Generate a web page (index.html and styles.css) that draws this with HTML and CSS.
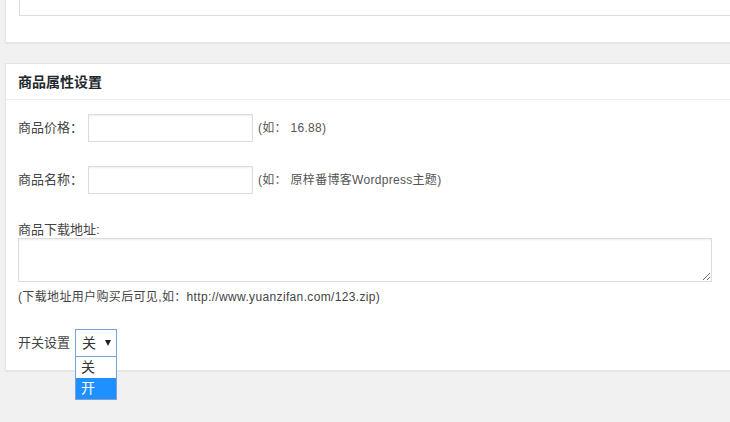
FILE: index.html
```html
<!DOCTYPE html>
<html lang="zh-CN">
<head>
<meta charset="utf-8">
<title>商品属性设置</title>
<link rel="stylesheet" href="styles.css">
</head>
<body>
<div class="wrap">
  <div class="postbox top-box">
    <div class="top-inner"></div>
  </div>
  <div class="postbox">
    <h2 class="box-title">商品属性设置</h2>
    <div class="inside">
      <div class="row row-price">
        <label class="lbl">商品价格：</label>
        <input class="field" type="text">
        <span class="hint">(如： 16.88)</span>
      </div>
      <div class="row row-name">
        <label class="lbl">商品名称：</label>
        <input class="field" type="text">
        <span class="hint">(如： 原梓番博客Wordpress主题)</span>
      </div>
      <div class="dl-label">商品下载地址:</div>
      <textarea class="area"></textarea>
      <div class="note">(下载地址用户购买后可见,如：http://www.yuanzifan.com/123.zip)</div>
      <div class="row row-switch">
        <span class="lbl">开关设置</span>
        <div class="select-wrap">
          <div class="select"><span class="sel-val">关</span><span class="arrow"></span></div>
          <ul class="options">
            <li class="opt">关</li>
            <li class="opt opt-active">开</li>
          </ul>
        </div>
      </div>
    </div>
  </div>
</div>
</body>
</html>
```
FILE: styles.css
```css
html, body {
  margin: 0;
  padding: 0;
  background: #f1f1f1;
  overflow: hidden;
  width: 730px;
  height: 422px;
}
body {
  font-family: "Liberation Sans", "Noto Sans CJK SC", sans-serif;
  font-size: 13px;
  color: #444;
}
.wrap {
  padding-left: 5px;
  width: 760px;
  display: flex;
  flex-direction: column;
  gap: 20px;
}
.postbox {
  background: #fff;
  border: 1px solid #e5e5e5;
  box-shadow: 0 1px 1px rgba(0,0,0,0.04);
}
.top-box {
  border-top: none;
  height: 43px;
  box-sizing: border-box;
  padding-left: 13px;
}
.top-inner {
  height: 16px;
  box-sizing: border-box;
  border: 1px solid #ddd;
  border-top: none;
}
.box-title {
  margin: 0;
  height: 36px;
  box-sizing: border-box;
  padding: 0 12px;
  font-size: 14px;
  font-weight: bold;
  color: #23282d;
  line-height: 37px;
  border-bottom: 1px solid #eee;
}
.inside {
  padding: 14px 12px 13px;
  display: flex;
  flex-direction: column;
  align-items: flex-start;
}
.row {
  display: flex;
  align-items: center;
  height: 28px;
}
.row-name { margin-top: 24px; }
.lbl {
  width: 70px;
  color: #444;
  line-height: 18px;
}
.row-switch .lbl { width: 57px; }
.field {
  width: 165px;
  height: 28px;
  box-sizing: border-box;
  border: 1px solid #ddd;
  box-shadow: inset 0 1px 2px rgba(0,0,0,0.07);
  margin: 0 5px 0 0;
  padding: 0;
}
.hint {
  color: #555;
  line-height: 18px;
  font-size: 12px;
  letter-spacing: 0.3px;
}
.dl-label {
  margin-top: 27px;
  line-height: 17px;
}
.area {
  width: 694px;
  height: 44px;
  box-sizing: border-box;
  border: 1px solid #ddd;
  box-shadow: inset 0 1px 2px rgba(0,0,0,0.07);
  margin: 0;
  padding: 0;
  display: block;
  resize: both;
}
.note {
  margin-top: 7px;
  line-height: 17px;
  color: #444;
  font-size: 12px;
  letter-spacing: 0.35px;
}
.row-switch { margin-top: 23px; }
.select-wrap {
  position: relative;
  width: 42px;
  height: 28px;
}
.select {
  box-sizing: border-box;
  width: 42px;
  height: 28px;
  border: 1px solid #7e9fd6;
  background: #fff;
  display: flex;
  align-items: center;
  padding-left: 6px;
  color: #333;
}
.sel-val { line-height: 18px; font-size: 14px; }
.arrow {
  width: 0;
  height: 0;
  border-left: 3px solid transparent;
  border-right: 3px solid transparent;
  border-top: 6px solid #222;
  margin-left: 9px;
  margin-top: -1px;
}
.options {
  position: absolute;
  left: 0;
  top: 27px;
  width: 42px;
  box-sizing: border-box;
  margin: 0;
  padding: 0;
  list-style: none;
  border: 1px solid #7e9fd6;
  background: #fff;
}
.opt {
  height: 21px;
  line-height: 21px;
  padding-left: 5px;
  font-size: 14px;
  color: #333;
}
.opt-active {
  background: #1e90ff;
  color: #fff;
}
```
